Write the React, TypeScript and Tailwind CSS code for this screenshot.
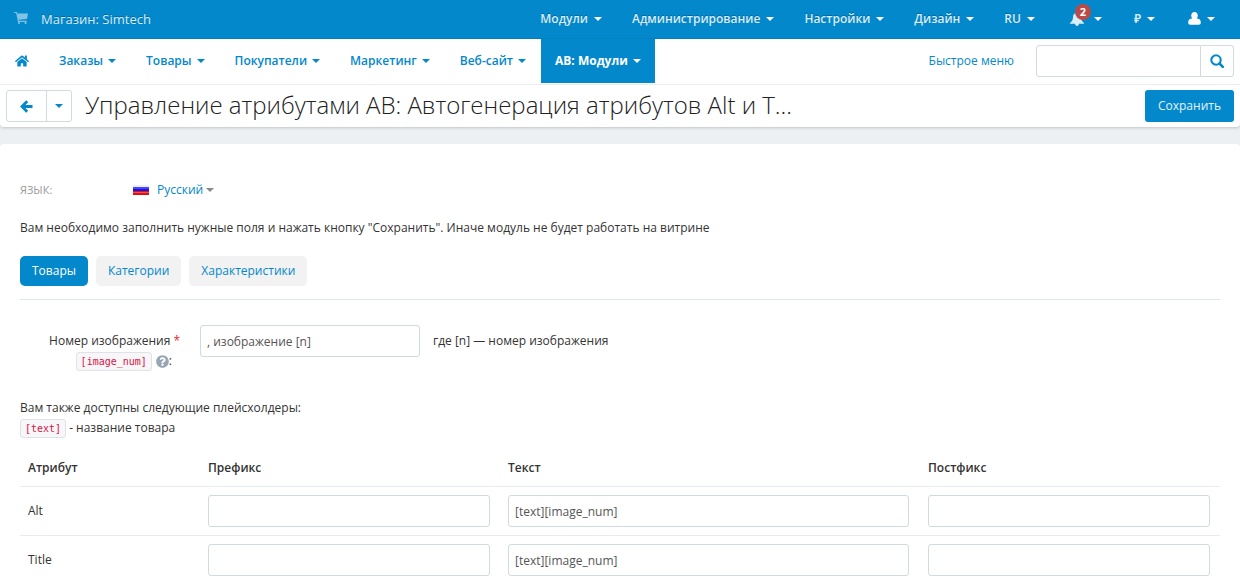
import React, { useState } from "react";
import { FaHome, FaQuestionCircle } from "react-icons/fa";

type MenuItemProps = {
  label: string;
  active?: boolean;
};

type TabButtonProps = {
  label: string;
  selected: boolean;
  onClick: () => void;
};

type AttributeRow = {
  name: string;
  prefix: string;
  text: string;
  postfix: string;
};

const topMenu = ["Модули", "Администрирование", "Настройки", "Дизайн", "RU"];

const mainMenu = ["Заказы", "Товары", "Покупатели", "Маркетинг", "Веб-сайт"];

const tabs = ["Товары", "Категории", "Характеристики"];

const rows: AttributeRow[] = [
  { name: "Alt", prefix: "", text: "[text][image_num]", postfix: "" },
  { name: "Title", prefix: "", text: "[text][image_num]", postfix: "" },
];

const Caret = () => (
  <svg width="8" height="4" viewBox="0 0 8 4" fill="currentColor" aria-hidden="true">
    <path d="M0 0h8L4 4z" />
  </svg>
);

const CartIcon = () => (
  <svg width="14" height="16" viewBox="0 0 14 16" fill="currentColor" aria-hidden="true">
    <path d="M0 1h3l.4 1.5H14L13 8 4.8 8.8 5 9.8h7.6v1.1H4L2.2 2.1H0z" />
    <circle cx="5" cy="12" r="1.1" />
    <circle cx="11.6" cy="12" r="1.1" />
  </svg>
);

const BellIcon = () => (
  <svg width="14" height="14" viewBox="0 0 14 14" fill="currentColor" aria-hidden="true">
    <path d="M7 0c.6 0 1 .4 1 1 2 .4 3 2 3 4 0 3 1 4.500 3 6v.7H9C8.900 13 8 13.900 7 13.900S5.100 13 5 11.700H0V11c2-1.500 3-3 3-6 0-2 1-3.600 3-4 0-.6.4-1 1-1z" />
  </svg>
);

const UserIcon = () => (
  <svg width="13" height="13" viewBox="0 0 13 13" fill="currentColor" aria-hidden="true">
    <path d="M6.500 0C8.500 0 9.800 1.500 9.800 3.600c0 1.200-.4 2.200-1 2.900C11.500 6.500 12.800 8 12.800 10.500c0 1.500-.8 2.200-2 2.200H2.200c-1.200 0-2-.7-2-2.200C.2 8 1.500 6.500 4.200 6.500c-.6-.7-1-1.700-1-2.900C3.200 1.500 4.500 0 6.500 0z" />
  </svg>
);

const ArrowLeftIcon = () => (
  <svg width="13" height="13" viewBox="0 0 13 13" fill="none" stroke="currentColor" aria-hidden="true">
    <path d="M7.200 1.200 2 6.500l5.200 5.300M2.500 6.500H12.500" strokeWidth="2.800" />
  </svg>
);

const SearchIcon = () => (
  <svg width="14" height="14" viewBox="0 0 14 14" fill="none" stroke="currentColor" aria-hidden="true">
    <circle cx="6" cy="6" r="4.700" strokeWidth="2.100" />
    <path d="M9.500 9.500 12.800 12.800" strokeWidth="2.600" strokeLinecap="round" />
  </svg>
);

const RussianFlag = () => (
  <svg width="16" height="11" viewBox="0 0 16 11" aria-hidden="true">
    <rect width="16" height="3" fill="#eeeeee" />
    <rect y="2" width="16" height="5" fill="#1414e6" />
    <rect y="2" width="16" height="2" fill="#4646ff" />
    <rect y="6" width="16" height="4" fill="#e01010" />
    <rect y="7" width="16" height="1" fill="#ff4a4a" />
  </svg>
);

const TopMenuItem = (props: MenuItemProps) => (
  <button className="flex items-center gap-[6px] font-semibold text-[#d9edf7] [text-shadow:0_-1px_0_rgba(0,0,0,0.25)]">
    {props.label}
    <span className="text-white">
      <Caret />
    </span>
  </button>
);

const MainMenuItem = (props: MenuItemProps) => (
  <button
    className={
      props.active
        ? "flex h-11 items-center gap-[5px] bg-[#0388cc] px-[14px] font-bold text-white"
        : "flex h-11 items-center gap-[5px] px-[15px] font-semibold text-[#0388cc]"
    }
  >
    {props.label}
    <Caret />
  </button>
);

const TabButton = (props: TabButtonProps) => (
  <button
    role="tab"
    aria-selected={props.selected}
    onClick={props.onClick}
    className={
      props.selected
        ? "h-[30px] rounded-[5px] bg-[#0388cc] px-3 text-white"
        : "h-[30px] rounded-[5px] bg-[#f2f2f2] px-3 text-[#0388cc]"
    }
  >
    {props.label}
  </button>
);

const Code = (props: { children: React.ReactNode }) => (
  <code className="rounded-[3px] border border-[#e1e1e8] bg-[#f7f7f9] px-1 font-['DejaVu_Sans_Mono',monospace] text-[10px] leading-[17px] text-[#dd1144]">
    {props.children}
  </code>
);

const TextField = (props: React.InputHTMLAttributes<HTMLInputElement>) => (
  <input
    type="text"
    {...props}
    className="h-8 w-full rounded-[3px] border border-[#d0dae1] bg-white px-[6px] text-[#555555] outline-none"
  />
);

const TopBar = () => (
  <header className="flex h-[39px] items-center justify-between border-b border-[#0380c0] bg-[#0388cc] pr-[25px] pb-px pl-[14px]">
    <a
      href="#"
      className="flex items-center gap-[13px] text-[13px] text-[#d9edf7] [text-shadow:0_-1px_0_rgba(0,0,0,0.25)]"
    >
      <span className="text-[#80c3e5]">
        <CartIcon />
      </span>
      Магазин: Simtech
    </a>
    <nav className="flex items-center gap-[30px]">
      {topMenu.map((label) => (
        <TopMenuItem label={label} key={label} />
      ))}
      <button
        aria-label="Уведомления"
        className="ml-[5px] flex items-center gap-[10px] text-white"
      >
        <span className="relative text-[#d9edf7]">
          <BellIcon />
          <span className="absolute -top-2 left-[5px] flex h-4 w-4 items-center justify-center rounded-full bg-[#b94a48] text-[11px] font-bold text-white">
            2
          </span>
        </span>
        <Caret />
      </button>
      <button aria-label="Валюта" className="ml-[2px] flex items-center gap-[6px] text-white">
        <span className="font-semibold text-[#d9edf7]">₽</span>
        <Caret />
      </button>
      <button aria-label="Профиль" className="ml-[3px] flex items-center gap-[6px] text-white">
        <UserIcon />
        <Caret />
      </button>
    </nav>
  </header>
);

const MainNav = () => (
  <div className="flex h-[46px] items-start justify-between border-b border-[#f2f2f2] bg-white pr-[6px] pl-[15px]">
    <nav className="flex items-center">
      <a href="#" aria-label="Главная" className="mr-[15px] text-[#0388cc]">
        <FaHome size={14} />
      </a>
      {mainMenu.map((label) => (
        <MainMenuItem label={label} key={label} />
      ))}
      <MainMenuItem label="АВ: Модули" active />
    </nav>
    <div className="flex h-11 items-center">
      <a href="#" className="mr-[22px] text-[#0388cc]">
        Быстрое меню
      </a>
      <form className="flex" onSubmit={(e) => e.preventDefault()}>
        <input
          type="text"
          aria-label="Поиск"
          className="h-8 w-[165px] rounded-l-[3px] border border-[#d0dae1] px-2 outline-none"
        />
        <button
          aria-label="Найти"
          className="flex h-8 w-[33px] items-center justify-center rounded-r-[3px] border border-l-0 border-[#d0dae1] text-[#0388cc]"
        >
          <SearchIcon />
        </button>
      </form>
    </div>
  </div>
);

const ActionBar = () => (
  <div className="flex h-[42px] items-center justify-between rounded-b-[4px] bg-white px-[6px] shadow-[0_1px_3px_rgba(0,0,0,0.18)]">
    <div className="flex min-w-0 items-center">
      <div className="flex shrink-0 rounded-[3px] border border-[#d0dae1] text-[#0388cc]">
        <button
          aria-label="Назад"
          className="flex h-[30px] w-10 items-center justify-center border-r border-[#d0dae1]"
        >
          <ArrowLeftIcon />
        </button>
        <button
          aria-label="Последние страницы"
          className="flex h-[30px] w-6 items-center justify-center"
        >
          <Caret />
        </button>
      </div>
      <h1 className="ml-[13px] truncate pb-[2px] text-[24px] leading-8 font-light text-[#222222]">
        Управление атрибутами АВ: Автогенерация атрибутов Alt и T...
      </h1>
    </div>
    <button className="h-8 shrink-0 rounded-[3px] bg-[#0388cc] px-[13px] text-[#e6f3fa]">
      Сохранить
    </button>
  </div>
);

const AttributeTable = () => (
  <table className="mt-3 w-full table-fixed border-separate border-spacing-0 text-left">
    <thead>
      <tr>
        <th className="w-[15%] p-2 font-semibold">Атрибут</th>
        <th className="w-[25%] p-2 font-semibold">Префикс</th>
        <th className="w-[35%] p-2 font-semibold">Текст</th>
        <th className="w-[25%] p-2 font-semibold">Постфикс</th>
      </tr>
    </thead>
    <tbody>
      {rows.map((row) => (
        <tr key={row.name}>
          <td className="border-t border-[#e9ecee] px-2">{row.name}</td>
          <td className="border-t border-[#e9ecee] py-2 pr-[10px] pl-2">
            <div className="flex">
              <TextField defaultValue={row.prefix} aria-label={row.name + " префикс"} />
            </div>
          </td>
          <td className="border-t border-[#e9ecee] py-2 pr-[11px] pl-2">
            <div className="flex">
              <TextField defaultValue={row.text} aria-label={row.name + " текст"} />
            </div>
          </td>
          <td className="border-t border-[#e9ecee] py-2 pr-[10px] pl-2">
            <div className="flex">
              <TextField defaultValue={row.postfix} aria-label={row.name + " постфикс"} />
            </div>
          </td>
        </tr>
      ))}
    </tbody>
  </table>
);

const App = () => {
  const [tab, setTab] = useState("Товары");
  return (
    <div className="flex min-h-screen flex-col bg-[#ecf0f3] font-['Open_Sans','Noto_Sans',sans-serif] text-[12px] leading-5 text-[#333333]">
      <TopBar />
      <MainNav />
      <ActionBar />
      <main className="mt-[17px] grow rounded-t-[4px] bg-white px-5 pt-9 pb-1">
        <div className="flex items-center">
          <span className="w-[113px] text-[11px] text-[#999999]">ЯЗЫК:</span>
          <button className="flex items-center text-[#0388cc]">
            <RussianFlag />
            <span className="ml-2">Русский</span>
            <span className="ml-[3px] text-[#888888]">
              <Caret />
            </span>
          </button>
        </div>
        <p className="mt-[18px]">
          Вам необходимо заполнить нужные поля и нажать кнопку "Сохранить". Иначе модуль не будет
          работать на витрине
        </p>
        <div role="tablist" className="mt-[18px] flex gap-2 border-b border-[#dfe6ea] pb-[13px]">
          {tabs.map((label) => (
            <TabButton
              label={label}
              selected={tab === label}
              onClick={() => setTab(label)}
              key={label}
            />
          ))}
        </div>
        <div className="mt-[25px] flex items-start">
          <label htmlFor="image-num" className="w-[160px] pt-[6px] text-right">
            Номер изображения<span className="ml-[3px] text-[#ee2233]">*</span>
            <span className="flex h-5 items-center justify-end pr-2">
              <Code>[image_num]</Code>
              <FaQuestionCircle size={13} className="ml-1 text-[#96a6b5]" />:
            </span>
          </label>
          <div className="ml-5 w-[220px]">
            <TextField id="image-num" defaultValue=", изображение [n]" />
          </div>
          <span className="ml-[13px] pt-[6px]">где [n] — номер изображения</span>
        </div>
        <p className="mt-[27px]">Вам также доступны следующие плейсхолдеры:</p>
        <p className="flex h-5 items-center gap-[3px]">
          <Code>[text]</Code> - название товара
        </p>
        <AttributeTable />
      </main>
    </div>
  );
};

export default App;
